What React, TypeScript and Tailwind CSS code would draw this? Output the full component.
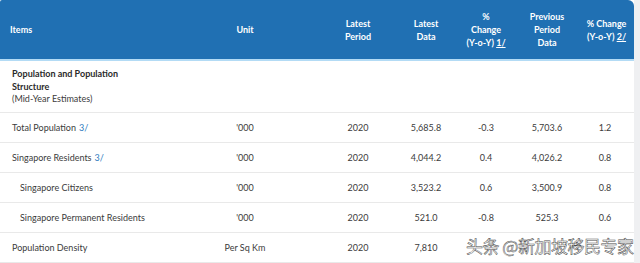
import React from "react";

const cols = "grid grid-cols-[188px_114px_112px_24px_96px_26px_30px_30px_14px]";

type Row = {
  label: string;
  link?: string;
  indent?: boolean;
  unit: string;
  period: string;
  data: string;
  chg: string;
  prev: string;
  chg2: string;
};

const rows: Row[] = [
  { label: "Total Population", link: "3/", unit: "'000", period: "2020", data: "5,685.8", chg: "-0.3", prev: "5,703.6", chg2: "1.2" },
  { label: "Singapore Residents", link: "3/", unit: "'000", period: "2020", data: "4,044.2", chg: "0.4", prev: "4,026.2", chg2: "0.8" },
  { label: "Singapore Citizens", indent: true, unit: "'000", period: "2020", data: "3,523.2", chg: "0.6", prev: "3,500.9", chg2: "0.8" },
  { label: "Singapore Permanent Residents", indent: true, unit: "'000", period: "2020", data: "521.0", chg: "-0.8", prev: "525.3", chg2: "0.6" },
  { label: "Population Density", unit: "Per Sq Km", period: "2020", data: "7,810", chg: "", prev: "", chg2: "" },
];

function C({ children }: { children?: React.ReactNode }) {
  return <div className="flex items-center justify-center whitespace-nowrap">{children}</div>;
}

export default function App() {
  return (
    <div className="relative w-[640px] h-[263px] overflow-hidden bg-white font-['Lato','Liberation_Sans',sans-serif] text-[9px] text-[#3b3b3b]">
      <div className="flex h-full">
        <div className="w-[634px] flex flex-col">
          {/* header */}
          <div className={`${cols} h-[59px] bg-[#2070b3] rounded-tr-[6px] rounded-tl-[2px] text-white font-bold leading-[13px] border-b-2 border-[#b3dbf5] box-content`}>
            <div className="flex items-center pl-[10px]">Items</div>
            <C>Unit</C>
            <C><span className="text-center">Latest<br />Period</span></C>
            <C><span className="text-center">Latest<br />Data</span></C>
            <C><span className="text-center">%<br />Change<br />(Y-o-Y) <span className="underline">1/</span></span></C>
            <C><span className="text-center">Previous<br />Period<br />Data</span></C>
            <div />
            <C><span className="text-center pl-[3px]">% Change<br />(Y-o-Y) <span className="underline">2/</span></span></C>
            <div />
          </div>
          {/* section */}
          <div className="h-[52px] border-b border-[#e9e9e9] pl-[12px] pt-[7px] leading-[12.5px]">
            <div className="font-bold text-[#2b2b2b]">Population and Population<br />Structure</div>
            <div>(Mid-Year Estimates)</div>
          </div>
          {rows.map((r) => (
            <div key={r.label} className={`${cols} h-[30px] border-b border-[#e9e9e9]`}>
              <div className={`flex items-center whitespace-nowrap ${r.indent ? "pl-[20px]" : "pl-[12px]"}`}>
                {r.label}
                {r.link && <span className="ml-[3px] text-[#2f7dc0]">{r.link}</span>}
              </div>
              <C>{r.unit}</C>
              <C>{r.period}</C>
              <C>{r.data}</C>
              <C>{r.chg}</C>
              <C>{r.prev}</C>
              <div />
              <C>{r.chg2}</C>
              <div />
            </div>
          ))}
        </div>
        <div className="flex-1 bg-[#eff0f2]" />
      </div>
      <div className="absolute left-[466px] top-[234px] text-[17px] leading-[24px] tracking-[-0.5px] text-white font-['Noto_Sans_CJK_SC',sans-serif] [-webkit-text-stroke:0.5px_#4a4a4a] whitespace-nowrap">
        头条 @新加坡移民专家
      </div>
    </div>
  );
}
